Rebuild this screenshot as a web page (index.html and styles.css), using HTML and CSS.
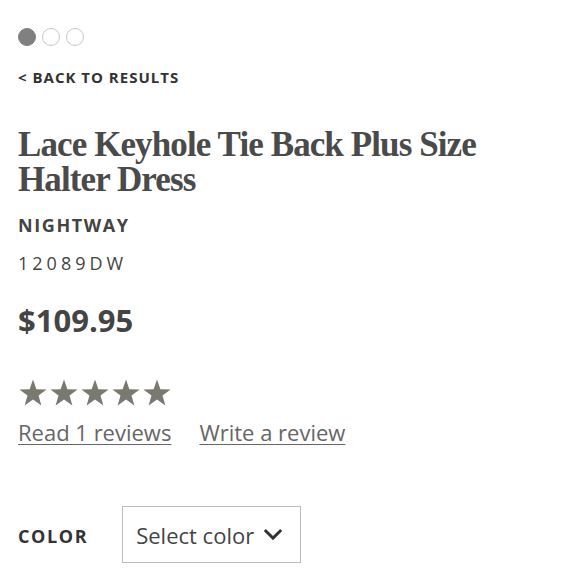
FILE: index.html
```html
<!DOCTYPE html>
<html>
<head>
<meta charset="utf-8">
<link rel="stylesheet" href="styles.css">
</head>
<body>
<div class="page">
  <div class="dots">
    <span class="dot active"></span><span class="dot"></span><span class="dot"></span>
  </div>
  <a class="back">&lt; BACK TO RESULTS</a>
  <h1 class="title">Lace Keyhole Tie Back Plus Size Halter Dress</h1>
  <div class="brand">NIGHTWAY</div>
  <div class="sku">12089DW</div>
  <div class="price">$109.95</div>
  <div class="stars">
    <svg viewBox="0 0 30 30" class="star"><path d="M15 1.5 L18.4 11.2 L28.6 11.4 L20.5 17.6 L23.4 27.4 L15 21.6 L6.6 27.4 L9.5 17.6 L1.4 11.4 L11.6 11.2 Z"/></svg>
    <svg viewBox="0 0 30 30" class="star"><path d="M15 1.5 L18.4 11.2 L28.6 11.4 L20.5 17.6 L23.4 27.4 L15 21.6 L6.6 27.4 L9.5 17.6 L1.4 11.4 L11.6 11.2 Z"/></svg>
    <svg viewBox="0 0 30 30" class="star"><path d="M15 1.5 L18.4 11.2 L28.6 11.4 L20.5 17.6 L23.4 27.4 L15 21.6 L6.6 27.4 L9.5 17.6 L1.4 11.4 L11.6 11.2 Z"/></svg>
    <svg viewBox="0 0 30 30" class="star"><path d="M15 1.5 L18.4 11.2 L28.6 11.4 L20.5 17.6 L23.4 27.4 L15 21.6 L6.6 27.4 L9.5 17.6 L1.4 11.4 L11.6 11.2 Z"/></svg>
    <svg viewBox="0 0 30 30" class="star"><path d="M15 1.5 L18.4 11.2 L28.6 11.4 L20.5 17.6 L23.4 27.4 L15 21.6 L6.6 27.4 L9.5 17.6 L1.4 11.4 L11.6 11.2 Z"/></svg>
  </div>
  <div class="links">
    <a class="link">Read 1 reviews</a>
    <a class="link">Write a review</a>
  </div>
  <div class="color-row">
    <span class="color-label">COLOR</span>
    <div class="select">
      <span>Select color</span>
      <svg class="chev" viewBox="0 0 22 14"><path d="M2 2 L11 11 L20 2" fill="none" stroke="#333" stroke-width="3.2"/></svg>
    </div>
  </div>
</div>
</body>
</html>
```
FILE: styles.css
```css
html, body {
  margin: 0;
  padding: 0;
  background: #fff;
}
body {
  font-family: "Open Sans", "Liberation Sans", sans-serif;
  color: #333;
}
.page {
  padding: 28px 18px 0 18px;
}
.dots {
  display: flex;
  gap: 6px;
  height: 18px;
}
.dot {
  width: 16px;
  height: 16px;
  border-radius: 50%;
  border: 1px solid #c8c8c8;
  background: #fff;
}
.dot.active {
  background: #808080;
  border-color: #808080;
}
.back {
  display: block;
  margin-top: 21px;
  font-size: 15px;
  font-weight: 700;
  letter-spacing: 1px;
  color: #333;
  line-height: 20px;
}
.title {
  margin: 40px 0 0 0;
  font-family: "Liberation Serif", "DejaVu Serif", serif;
  font-weight: 700;
  font-size: 35px;
  line-height: 35px;
  color: #4a4a4a;
  letter-spacing: -0.9px;
  width: 480px;
}
.brand {
  margin-top: 16px;
  font-size: 18px;
  font-weight: 700;
  letter-spacing: 1.6px;
  color: #444;
  line-height: 24px;
}
.sku {
  margin-top: 14px;
  font-size: 18px;
  letter-spacing: 4px;
  color: #444;
  line-height: 24px;
}
.price {
  margin-top: 25px;
  font-size: 31px;
  font-weight: 700;
  color: #444;
  line-height: 40px;
}
.stars {
  margin-top: 38px;
  display: flex;
  gap: 1px;
  height: 30px;
}
.star {
  width: 30px;
  height: 30px;
  fill: #797970;
}
.links {
  margin-top: 9px;
  display: flex;
  gap: 28px;
  font-size: 22px;
  line-height: 30px;
}
.link {
  color: #666;
  text-decoration: underline;
  text-underline-offset: 3px;
  text-decoration-thickness: 1px;
}
.color-row {
  margin-top: 59px;
  display: flex;
  align-items: center;
  gap: 34px;
}
.color-label {
  font-size: 18px;
  font-weight: 700;
  letter-spacing: 1.6px;
  color: #333;
  padding-top: 2px;
}
.select {
  width: 164px;
  height: 55px;
  border: 1px solid #bbb;
  display: flex;
  align-items: center;
  padding-left: 13px;
  box-sizing: content-box;
  font-size: 22px;
  color: #444;
  gap: 9px;
}
.chev {
  width: 20px;
  height: 13px;
}
```
